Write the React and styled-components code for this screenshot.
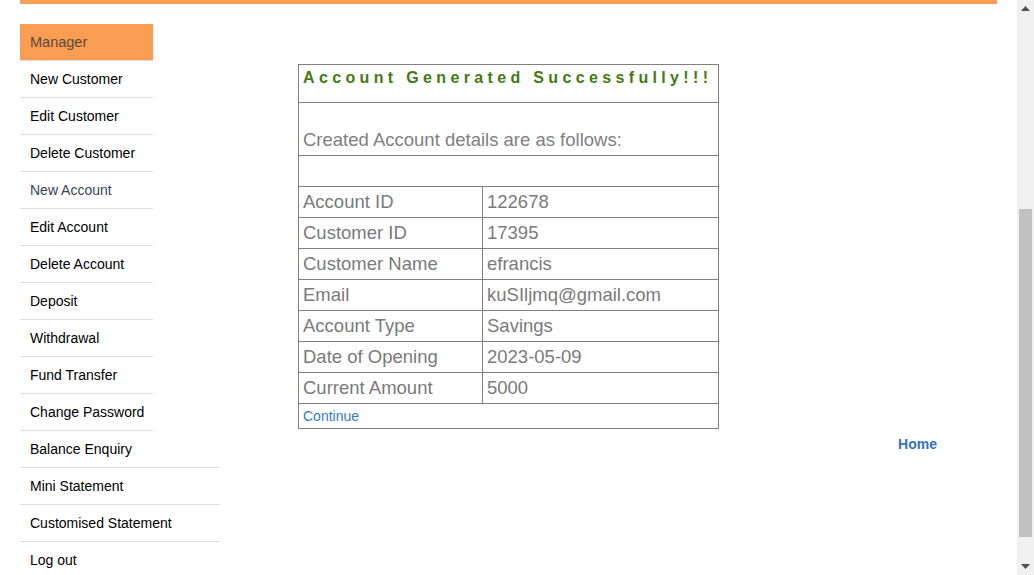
import React from "react";
import styled, { createGlobalStyle } from "styled-components";

const GlobalStyle = createGlobalStyle`
	html, body {
		margin: 0;
		padding: 0;
		height: 100%;
		overflow: hidden;
		background: #fff;
	}
	body {
		font-family: "Liberation Sans", Arial, sans-serif;
		font-size: 14px;
	}
`;

const Viewport = styled.div`
	display: flex;
	height: 575px;
	overflow: hidden;
`;

const Page = styled.div`
	flex: 1;
	padding: 0 20px;
`;

const Container = styled.div`
	border-top: 4px solid #f99d52;
	padding-top: 20px;
	display: grid;
	grid-template-columns: 1fr;
	grid-template-rows: auto;
	& > * {
		grid-area: 1 / 1;
	}
`;

const Sidebar = styled.ul`
	list-style: none;
	margin: 0;
	padding: 0;
	justify-self: start;
	align-self: start;
	width: 200px;
`;

const SideItem = styled.li`
	box-sizing: border-box;
	width: ${(p) => (p.wide ? "200px" : "133px")};
	height: 37px;
	padding: 0 10px;
	display: flex;
	align-items: center;
	border-bottom: 1px solid #dddddd;
	color: ${(p) => (p.muted ? "#3b4157" : "#000")};
	white-space: nowrap;

	&.head {
		background: #f99d52;
		color: #5a4a3e;
		font-size: 14.5px;
	}
`;

const Main = styled.div`
	justify-self: stretch;
	padding-top: 40px;
	display: flex;
	flex-direction: column;
	align-items: center;
`;

const Table = styled.table`
	border-collapse: collapse;
	width: 421px;
	font-family: "Liberation Sans", Arial, sans-serif;

	td {
		border: 1px solid #808080;
		padding: 0 4px;
		box-sizing: border-box;
	}
`;

const TitleCell = styled.td`
	height: 38px;
	vertical-align: top;
	padding-top: 4px !important;
	font-size: 16px;
	font-weight: bold;
	letter-spacing: 4.35px;
	color: #437a13;
	white-space: nowrap;
`;

const NoteCell = styled.td`
	height: 53px;
	vertical-align: bottom;
	padding-bottom: 4px !important;
	font-size: 18.5px;
	color: #808080;
`;

const BlankCell = styled.td`
	height: 31px;
`;

const DataCell = styled.td`
	height: 31px;
	font-size: 18.5px;
	color: #7a7a7a;
	width: ${(p) => (p.label ? "184px" : "auto")};
	white-space: nowrap;
`;

const LinkCell = styled.td`
	height: 25px;
	font-size: 14px;
`;

const Link = styled.a`
	color: ${(p) => (p.strong ? "#3572b6" : "#3a7ac0")};
	font-weight: ${(p) => (p.strong ? "bold" : "normal")};
	text-decoration: none;
	cursor: pointer;
`;

const HomeRow = styled.div`
	align-self: stretch;
	display: flex;
	justify-content: flex-end;
	padding: 7px 60px 0 0;
	font-size: 14px;
`;

const Scrollbar = styled.div`
	width: 17px;
	background: #f0f0f0;
	display: flex;
	flex-direction: column;
	align-items: center;
`;

const Arrow = styled.div`
	height: 17px;
	width: 17px;
	display: flex;
	align-items: center;
	justify-content: center;
`;

const Gap = styled.div`
	height: ${(p) => p.h}px;
`;

const Thumb = styled.div`
	width: 13px;
	height: 328px;
	background: #c1c1c1;
`;

const menu = [
	{ name: "New Customer" },
	{ name: "Edit Customer" },
	{ name: "Delete Customer" },
	{ name: "New Account", muted: true },
	{ name: "Edit Account" },
	{ name: "Delete Account" },
	{ name: "Deposit" },
	{ name: "Withdrawal" },
	{ name: "Fund Transfer" },
	{ name: "Change Password" },
	{ name: "Balance Enquiry", wide: true },
	{ name: "Mini Statement", wide: true },
	{ name: "Customised Statement", wide: true },
	{ name: "Log out", wide: true },
];

const details = [
	["Account ID", "122678"],
	["Customer ID", "17395"],
	["Customer Name", "efrancis"],
	["Email", "kuSIljmq@gmail.com"],
	["Account Type", "Savings"],
	["Date of Opening", "2023-05-09"],
	["Current Amount", "5000"],
];

const App = () => (
	<>
		<GlobalStyle />
		<Viewport>
			<Page>
				<Container>
					<Sidebar>
						<SideItem className="head">Manager</SideItem>
						{menu.map((m) => (
							<SideItem key={m.name} wide={m.wide} muted={m.muted}>
								{m.name}
							</SideItem>
						))}
					</Sidebar>
					<Main>
						<Table>
							<tbody>
								<tr>
									<TitleCell colSpan={2}>Account Generated Successfully!!!</TitleCell>
								</tr>
								<tr>
									<NoteCell colSpan={2}>Created Account details are as follows:</NoteCell>
								</tr>
								<tr>
									<BlankCell colSpan={2} />
								</tr>
								{details.map(([k, v]) => (
									<tr key={k}>
										<DataCell label="1">{k}</DataCell>
										<DataCell>{v}</DataCell>
									</tr>
								))}
								<tr>
									<LinkCell colSpan={2}>
										<Link>Continue</Link>
									</LinkCell>
								</tr>
							</tbody>
						</Table>
						<HomeRow>
							<Link strong>Home</Link>
						</HomeRow>
					</Main>
				</Container>
			</Page>
			<Scrollbar>
				<Arrow>
					<svg width="9" height="5" viewBox="0 0 9 5">
						<path d="M4.5 0 L9 5 L0 5 Z" fill="#505050" />
					</svg>
				</Arrow>
				<Gap h={192} />
				<Thumb />
				<Gap h={21} />
				<Arrow>
					<svg width="9" height="5" viewBox="0 0 9 5">
						<path d="M0 0 L9 0 L4.5 5 Z" fill="#505050" />
					</svg>
				</Arrow>
			</Scrollbar>
		</Viewport>
	</>
);

export default App;
